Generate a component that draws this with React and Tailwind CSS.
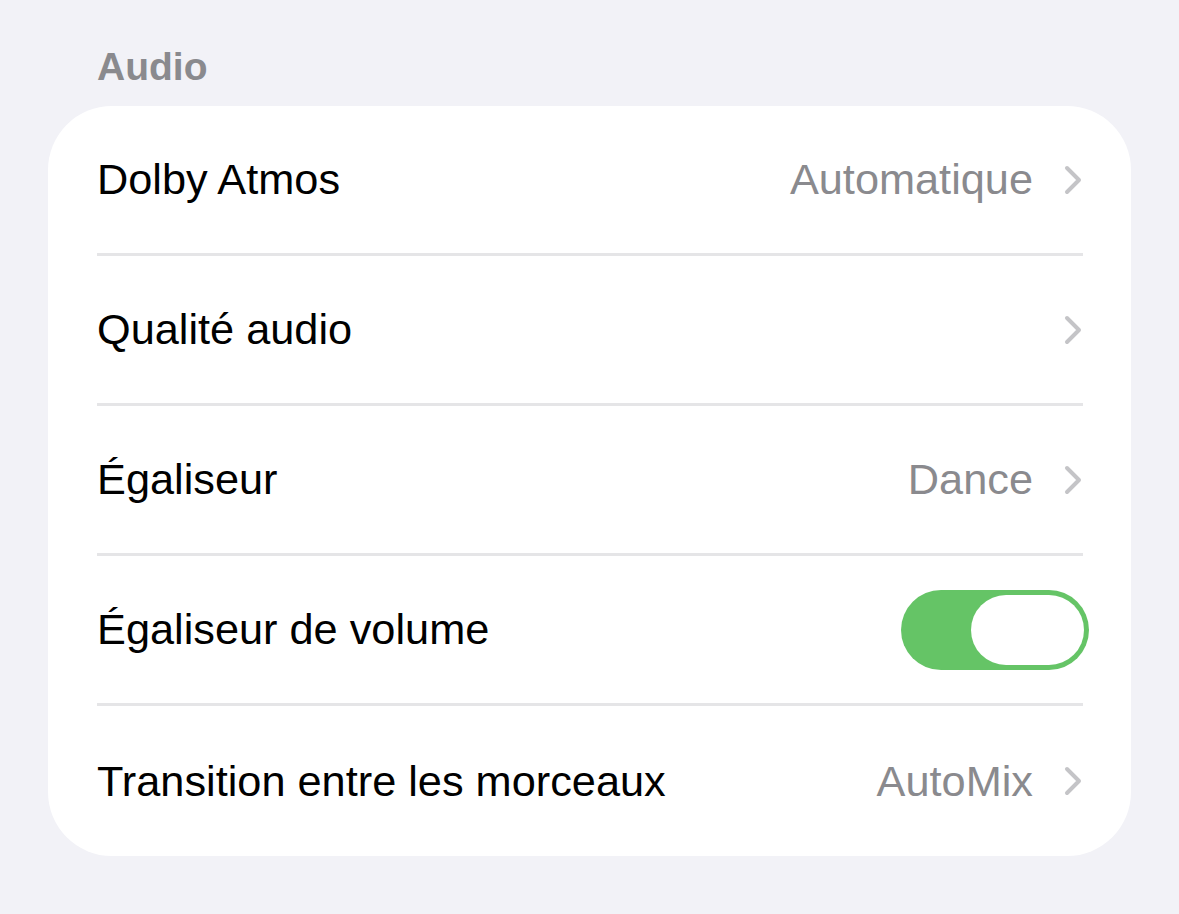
const rows = [
  { label: 'Dolby Atmos', value: 'Automatique', type: 'link' },
  { label: 'Qualité audio', value: '', type: 'link' },
  { label: 'Égaliseur', value: 'Dance', type: 'link' },
  { label: 'Égaliseur de volume', type: 'toggle', on: true },
  { label: 'Transition entre les morceaux', value: 'AutoMix', type: 'link' },
];

function Chevron() {
  return (
    <svg width="20" height="30" viewBox="0 0 20 30" fill="none" className="shrink-0">
      <path
        d="M4 3 L16 15 L4 27"
        stroke="#c4c4c7"
        strokeWidth="4"
        strokeLinecap="round"
        strokeLinejoin="round"
      />
    </svg>
  );
}

function Toggle({ on }) {
  return (
    <div
      className={`-mr-[6px] flex h-[80px] w-[188px] items-center rounded-full p-[5px] ${
        on ? 'justify-end bg-[#65c466]' : 'justify-start bg-[#e9e9ea]'
      }`}
    >
      <div className="h-[70px] w-[113px] rounded-full bg-white" />
    </div>
  );
}

export default function App() {
  return (
    <div
      className="h-[914px] w-full bg-[#f2f2f7] pt-[44px]"
      style={{ fontFamily: '"Liberation Sans", Arial, sans-serif' }}
    >
      <h2 className="pl-[97px] text-[39px] font-bold leading-[46px] text-[#8a8a8e]">Audio</h2>

      <div className="ml-[48px] mt-[16px] w-[1083px] rounded-[64px] bg-white">
        {rows.map((row, i) => (
          <div key={row.label} className="ml-[49px] mr-[48px]">
            <div
              className={`flex h-[150px] items-center justify-between ${
                i < rows.length - 1 ? 'border-b-[3px] border-[#e5e5e7]' : ''
              }`}
            >
              <span className="text-[43.3px] text-black">{row.label}</span>
              {row.type === 'toggle' ? (
                <Toggle on={row.on} />
              ) : (
                <div className="flex items-center gap-[30px]">
                  {row.value && <span className="text-[43.3px] text-[#8a8a8e]">{row.value}</span>}
                  <Chevron />
                </div>
              )}
            </div>
          </div>
        ))}
      </div>
    </div>
  );
}
